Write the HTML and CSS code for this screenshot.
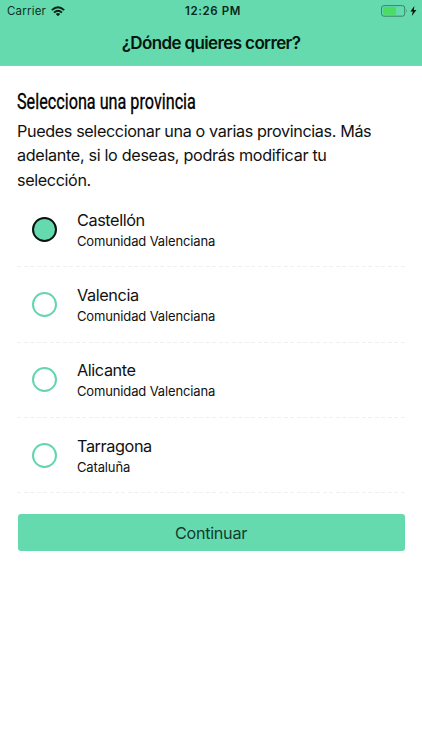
FILE: index.html
```html
<!DOCTYPE html>
<html lang="es">
<head>
<meta charset="utf-8">
<title>¿Dónde quieres correr?</title>
<link rel="stylesheet" href="styles.css">
</head>
<body>
<header class="header">
  <div class="status">
    <div class="status-left"><span class="carrier">Carrier</span>
      <svg class="wifi" width="14" height="11" viewBox="0 0 14 11" fill="none" stroke="#08241a" stroke-width="1.9"><path d="M.8 4.1Q7-1.6 13.2 4.1M3 6.6Q7 3 11 6.6"/><path d="M4.8 8Q7 6.2 9.2 8L7 10.3Z" fill="#08241a" stroke="none"/></svg>
    </div>
    <span class="time">12:26 PM</span>
    <div class="status-right">
      <svg width="37" height="12" viewBox="0 0 37 12"><rect x="1.5" y=".6" width="23.2" height="10.6" rx="2.4" fill="none" stroke="#39846a"/><rect x="3" y="2.1" width="13" height="7.6" rx="1" fill="#4cdb63"/><path d="M26 4.2Q27.4 5.9 26 7.6Z" fill="#39846a"/><path d="M34.4 1L30.4 6.6H32.8L31.8 11L36.4 5H33.8Z" fill="#04150f"/></svg>
    </div>
  </div>
  <h1 class="title">¿Dónde quieres correr?</h1>
</header>
<main class="content">
  <h2 class="heading"><span class="heading-text">Selecciona una provincia</span></h2>
  <p class="intro">Puedes seleccionar una o varias provincias. Más<br><span class="intro-wide">adelante, si lo deseas, podrás modificar tu</span><br>selección.</p>
  <ul class="list">
    <li class="item"><span class="radio selected"></span><div><div class="name">Castellón</div><div class="region">Comunidad Valenciana</div></div></li>
    <li class="item"><span class="radio"></span><div><div class="name">Valencia</div><div class="region">Comunidad Valenciana</div></div></li>
    <li class="item"><span class="radio"></span><div><div class="name">Alicante</div><div class="region">Comunidad Valenciana</div></div></li>
    <li class="item"><span class="radio"></span><div><div class="name">Tarragona</div><div class="region">Cataluña</div></div></li>
  </ul>
  <button class="button">Continuar</button>
</main>
</body>
</html>
```
FILE: styles.css
```css
* { box-sizing: border-box; }
body { margin: 0; background: #fff; color: #111; font-family: Inter, "Liberation Sans", sans-serif; }
.header { height: 66px; background: #65daae; border-bottom: 1px solid #80d5b3; }
.status { display: grid; grid-template-columns: 1fr auto 1fr; align-items: center; height: 22px; padding: 0 5px 0 7px; color: #0c3325; font-size: 11.5px; }
.status-left { display: flex; align-items: center; gap: 5px; }
.carrier { letter-spacing: .2px; }
.time { font-weight: 600; letter-spacing: .6px; padding-left: 2px; color: #092a1e; }
.status-right { display: flex; justify-content: flex-end; }
.title { margin: 9px 0 0; line-height: 24px; text-align: center; font-size: 17px; font-weight: 600; letter-spacing: -.62px; color: #06170f; }
.content { padding: 24px 17px 0; }
.heading { margin: 0; height: 29px; line-height: 23px; font-family: Roboto, sans-serif; font-size: 22.5px; font-weight: 400; color: #000; }
.heading-text { display: inline-block; white-space: nowrap; transform: scaleX(.72); transform-origin: left; -webkit-text-stroke: .35px #000; }
.intro { margin: 0; font-size: 16.2px; line-height: 24.3px; letter-spacing: -.38px; white-space: nowrap; }
.intro-wide { letter-spacing: -.33px; }
.list { list-style: none; margin: 0; padding: 0; }
.item { display: flex; align-items: center; gap: 20px; height: 75.4px; padding-left: 15px; background: repeating-linear-gradient(90deg, #f0f0f0 0 4px, transparent 4px 6.5px) left bottom / 100% 1px no-repeat; }
.radio { width: 25px; height: 25px; margin: -1px .5px 0 -.5px; border: 2px solid #65d5ad; border-radius: 50%; }
.radio.selected { background: #65daae; border-color: #08130f; }
.name { font-size: 16.3px; line-height: 22px; letter-spacing: -.42px; }
.region { font-size: 13px; line-height: 21px; letter-spacing: -.14px; }
.button { display: block; width: 387px; height: 37px; margin: 21px 0 0 .5px; padding: 0; border: 0; border-radius: 3px; background: #65daae; color: #143c2e; font-family: inherit; font-size: 16.2px; letter-spacing: -.3px; }
.name { margin-top: 1px; }
```
